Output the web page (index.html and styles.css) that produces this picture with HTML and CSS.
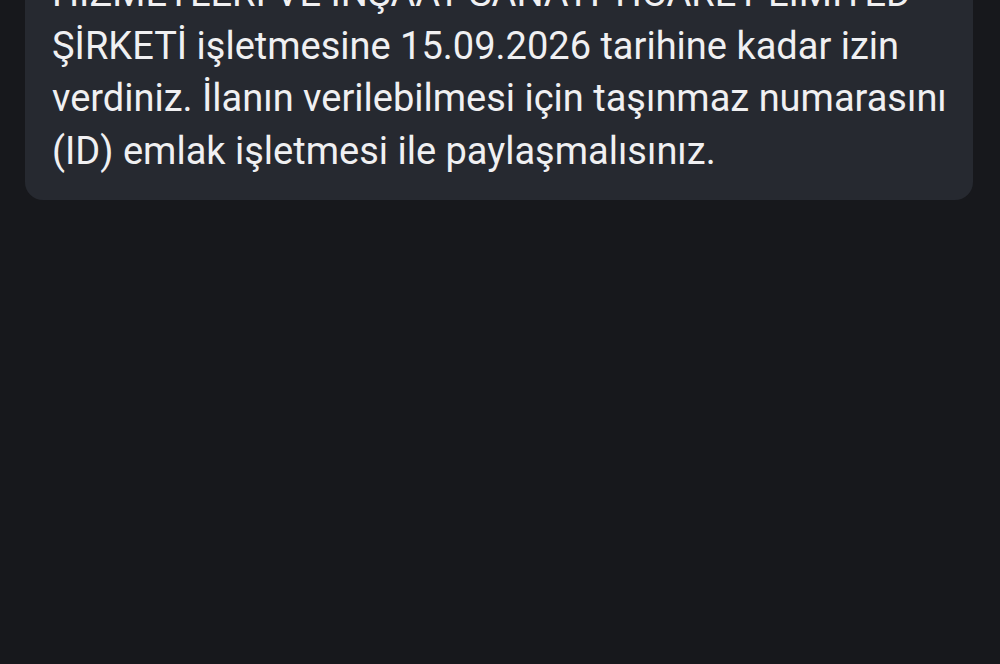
FILE: index.html
```html
<!DOCTYPE html>
<html lang="tr">
<head>
<meta charset="utf-8">
<link rel="stylesheet" href="styles.css">
</head>
<body>
<div class="page">
  <div class="card">
    <p class="msg">HİZMETLERİ VE İNŞAAT SANAYİ TİCARET LİMİTED<br>ŞİRKETİ işletmesine 15.09.2026 tarihine kadar izin<br>verdiniz. İlanın verilebilmesi için taşınmaz numarasını<br>(ID) emlak işletmesi ile paylaşmalısınız.</p>
  </div>
</div>
</body>
</html>
```
FILE: styles.css
```css
html, body {
  margin: 0;
  padding: 0;
  background: #17181c;
}
.page {
  width: 1000px;
  height: 664px;
  overflow: hidden;
  background: #17181c;
  padding: 0 27px 0 25px;
  box-sizing: border-box;
}
.card {
  margin-top: -33px;
  background: #262930;
  border-radius: 0 0 18px 18px;
  padding: 0 10px 23px 27px;
}
.msg {
  margin: 0;
  font-family: Roboto, "Noto Sans", sans-serif;
  font-size: 38px;
  letter-spacing: 0;
  line-height: 52.5px;
  color: #f0f0f2;
  white-space: nowrap;
}
```
